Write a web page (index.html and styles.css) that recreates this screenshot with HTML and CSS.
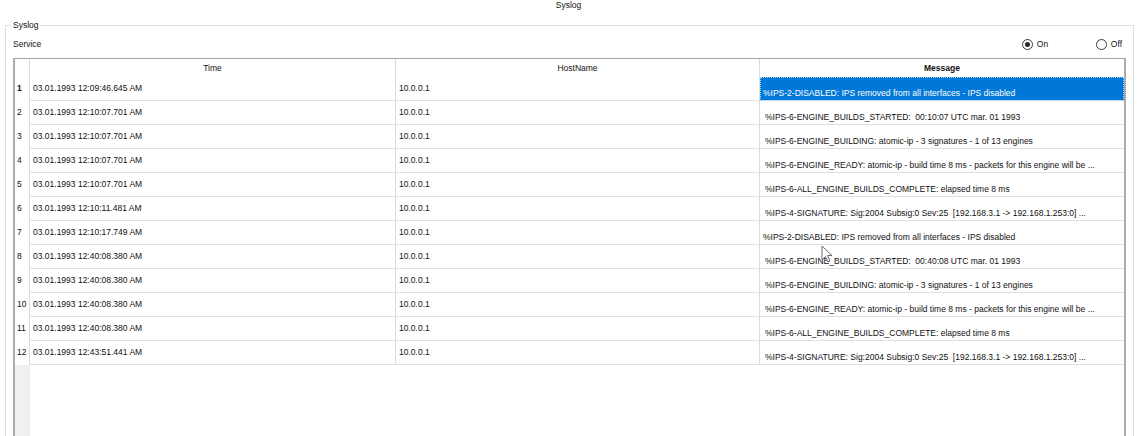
FILE: index.html
```html
<!DOCTYPE html>
<html>
<head>
<meta charset="utf-8">
<link rel="stylesheet" href="styles.css">
</head>
<body>
<div class="title">Syslog</div>
<fieldset class="group">
  <legend>Syslog</legend>
  <div class="service-row">
    <span>Service</span>
    <div class="radios">
      <label class="radio on"><span class="dot"></span>On</label>
      <label class="radio"><span class="dot"></span>Off</label>
    </div>
  </div>
  <div class="grid">
    <div class="row head">
      <div class="rh"></div>
      <div class="c">Time</div>
      <div class="c">HostName</div>
      <div class="c b">Message</div>
    </div>
    <div class="row">
      <div class="rh b">1</div>
      <div class="c">03.01.1993 12:09:46.645 AM</div>
      <div class="c">10.0.0.1</div>
      <div class="c msg sel">%IPS-2-DISABLED: IPS removed from all interfaces - IPS disabled</div>
    </div>
    <div class="row">
      <div class="rh">2</div>
      <div class="c">03.01.1993 12:10:07.701 AM</div>
      <div class="c">10.0.0.1</div>
      <div class="c msg ind">%IPS-6-ENGINE_BUILDS_STARTED:  00:10:07 UTC mar. 01 1993</div>
    </div>
    <div class="row">
      <div class="rh">3</div>
      <div class="c">03.01.1993 12:10:07.701 AM</div>
      <div class="c">10.0.0.1</div>
      <div class="c msg ind">%IPS-6-ENGINE_BUILDING: atomic-ip - 3 signatures - 1 of 13 engines</div>
    </div>
    <div class="row">
      <div class="rh">4</div>
      <div class="c">03.01.1993 12:10:07.701 AM</div>
      <div class="c">10.0.0.1</div>
      <div class="c msg ind">%IPS-6-ENGINE_READY: atomic-ip - build time 8 ms - packets for this engine will be ...</div>
    </div>
    <div class="row">
      <div class="rh">5</div>
      <div class="c">03.01.1993 12:10:07.701 AM</div>
      <div class="c">10.0.0.1</div>
      <div class="c msg ind">%IPS-6-ALL_ENGINE_BUILDS_COMPLETE: elapsed time 8 ms</div>
    </div>
    <div class="row">
      <div class="rh">6</div>
      <div class="c">03.01.1993 12:10:11.481 AM</div>
      <div class="c">10.0.0.1</div>
      <div class="c msg ind">%IPS-4-SIGNATURE: Sig:2004 Subsig:0 Sev:25  [192.168.3.1 -&gt; 192.168.1.253:0] ...</div>
    </div>
    <div class="row">
      <div class="rh">7</div>
      <div class="c">03.01.1993 12:10:17.749 AM</div>
      <div class="c">10.0.0.1</div>
      <div class="c msg">%IPS-2-DISABLED: IPS removed from all interfaces - IPS disabled</div>
    </div>
    <div class="row">
      <div class="rh">8</div>
      <div class="c">03.01.1993 12:40:08.380 AM</div>
      <div class="c">10.0.0.1</div>
      <div class="c msg ind">%IPS-6-ENGINE_BUILDS_STARTED:  00:40:08 UTC mar. 01 1993</div>
    </div>
    <div class="row">
      <div class="rh">9</div>
      <div class="c">03.01.1993 12:40:08.380 AM</div>
      <div class="c">10.0.0.1</div>
      <div class="c msg ind">%IPS-6-ENGINE_BUILDING: atomic-ip - 3 signatures - 1 of 13 engines</div>
    </div>
    <div class="row">
      <div class="rh">10</div>
      <div class="c">03.01.1993 12:40:08.380 AM</div>
      <div class="c">10.0.0.1</div>
      <div class="c msg ind">%IPS-6-ENGINE_READY: atomic-ip - build time 8 ms - packets for this engine will be ...</div>
    </div>
    <div class="row">
      <div class="rh">11</div>
      <div class="c">03.01.1993 12:40:08.380 AM</div>
      <div class="c">10.0.0.1</div>
      <div class="c msg ind">%IPS-6-ALL_ENGINE_BUILDS_COMPLETE: elapsed time 8 ms</div>
    </div>
    <div class="row">
      <div class="rh">12</div>
      <div class="c">03.01.1993 12:43:51.441 AM</div>
      <div class="c">10.0.0.1</div>
      <div class="c msg ind">%IPS-4-SIGNATURE: Sig:2004 Subsig:0 Sev:25  [192.168.3.1 -&gt; 192.168.1.253:0] ...</div>
    </div>
    <div class="filler">
      <div class="rh-fill"></div>
      <div></div>
    </div>
  </div>
</fieldset>
<svg class="cursor" width="13" height="19" viewBox="0 0 13 19">
  <path d="M1 1 L1 15 L4.5 11.5 L7 17 L9 16 L6.5 10.5 L11 10.5 Z" fill="#fff" stroke="#6a6a6a" stroke-width="1" stroke-linejoin="round"/>
</svg>
</body>
</html>
```

FILE: styles.css
```css
html, body {
  margin: 0;
  padding: 0;
  background: #fff;
  overflow: hidden;
}
body {
  font-family: "Liberation Sans", Arial, sans-serif;
  font-size: 8.5px;
  color: #111;
  position: relative;
  height: 436px;
}
.title {
  height: 20px;
  line-height: 10px;
  text-align: center;
}
.group {
  margin: 0 3px 0 5px;
  padding: 5px 7px 0 7px;
  border: 1px solid #dedede;
  min-width: 0;
}
.group legend {
  padding: 0 1px;
  margin-left: -1px;
  line-height: 10px;
  font-size: 8.5px;
}
.service-row {
  display: flex;
  justify-content: space-between;
  align-items: center;
  height: 18px;
  margin-bottom: 5px;
}
.radios {
  display: flex;
  padding-right: 4px;
}
.radio {
  display: flex;
  align-items: center;
  gap: 4px;
}
.radio.on {
  width: 74px;
}
.dot {
  display: inline-block;
  width: 9px;
  height: 9px;
  border: 1px solid #3a3a3a;
  border-radius: 50%;
  background: #fff;
  position: relative;
}
.radio.on .dot::after {
  content: "";
  position: absolute;
  left: 2px;
  top: 2px;
  width: 5px;
  height: 5px;
  border-radius: 50%;
  background: #2a2a2a;
}
.grid {
  border-top: 1px solid #a4a4a4;
  border-left: 2px solid #acacac;
  border-right: 2px solid #acacac;
}
.row {
  display: grid;
  grid-template-columns: 15px 366px 364px 364px;
  height: 24px;
}
.row.head {
  height: 18px;
}
.rh {
  border-right: 1px solid #dcdcdc;
  padding-left: 2px;
  line-height: 23px;
}
.head .rh {
  line-height: 18px;
}
.c {
  border-right: 1px solid #dcdcdc;
  border-bottom: 1px solid #e0e0e0;
  padding-left: 3px;
  line-height: 23px;
  white-space: pre;
  overflow: hidden;
}
.c:last-child {
  border-right: none;
}
.head .c {
  border-bottom: none;
  text-align: center;
  padding-left: 0;
  line-height: 18px;
}
.b {
  font-weight: bold;
}
.msg {
  display: flex;
  align-items: flex-end;
  line-height: 10px;
  padding-bottom: 2px;
}
.msg.ind {
  padding-left: 5px;
}
.sel {
  background: #0078d7;
  color: #fff;
  outline: 1px dotted #a9d0f2;
  outline-offset: -1px;
}
.filler {
  display: grid;
  grid-template-columns: 15px 1fr;
  height: 120px;
}
.rh-fill {
  background: #f0f0f0;
}
.cursor {
  position: absolute;
  left: 821px;
  top: 245px;
}
```
